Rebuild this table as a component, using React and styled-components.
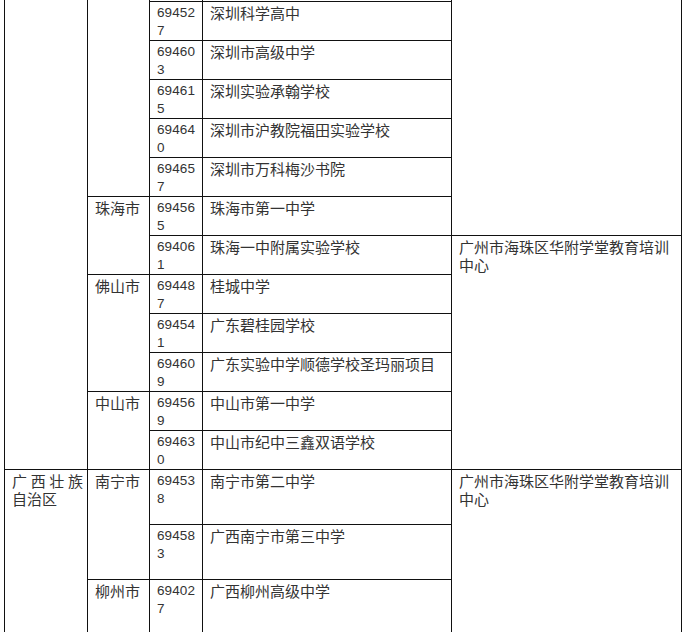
import React from "react";
import styled, { createGlobalStyle } from "styled-components";

const GlobalStyle = createGlobalStyle`
  html, body { margin: 0; padding: 0; background: #fff; overflow: hidden; }
`;

const Sheet = styled.table`
  margin: -22px 0 0 4px;
  border-collapse: collapse;
  table-layout: fixed;
  width: 677px;
  font-family: "Noto Sans CJK SC", sans-serif;
  font-size: 15px;
  color: #333;
`;

const Col = styled.col`
  width: ${(p) => p.$w}px;
`;

const Row = styled.tr`
  height: ${(p) => p.$h}px;
`;

const Cell = styled.td`
  border: 1px solid #111;
  padding: 2px 4px 0 7px;
  vertical-align: top;
  line-height: 18px;
  text-align: ${(p) => (p.$justify ? "justify" : "left")};
  word-break: break-all;
`;

const Code = styled(Cell)`
  font-family: "Liberation Sans", sans-serif;
  font-size: 13.5px;
  letter-spacing: 0.1px;
`;

const CENTER = "广州市海珠区华附学堂教育培训中心";

const columns = [83, 62, 53, 249, 230];

const rows = [
  { h: 23, prov: { text: "", span: 13 }, city: { text: "", span: 6 }, code: "", school: "", center: { text: "", span: 7 } },
  { h: 39, code: "694527", school: "深圳科学高中" },
  { h: 39, code: "694603", school: "深圳市高级中学" },
  { h: 39, code: "694615", school: "深圳实验承翰学校" },
  { h: 39, code: "694640", school: "深圳市沪教院福田实验学校" },
  { h: 39, code: "694657", school: "深圳市万科梅沙书院" },
  { h: 39, city: { text: "珠海市", span: 2 }, code: "694565", school: "珠海市第一中学" },
  { h: 39, code: "694061", school: "珠海一中附属实验学校", center: { text: CENTER, span: 6 } },
  { h: 39, city: { text: "佛山市", span: 3 }, code: "694487", school: "桂城中学" },
  { h: 39, code: "694541", school: "广东碧桂园学校" },
  { h: 39, code: "694609", school: "广东实验中学顺德学校圣玛丽项目" },
  { h: 39, city: { text: "中山市", span: 2 }, code: "694569", school: "中山市第一中学" },
  { h: 39, code: "694630", school: "中山市纪中三鑫双语学校" },
  { h: 55, prov: { text: "广西壮族自治区", span: 3 }, city: { text: "南宁市", span: 2 }, code: "694538", school: "南宁市第二中学", center: { text: CENTER, span: 3 } },
  { h: 55, code: "694583", school: "广西南宁市第三中学" },
  { h: 60, city: { text: "柳州市", span: 1 }, code: "694027", school: "广西柳州高级中学" },
];

export default function App() {
  return (
    <>
      <GlobalStyle />
      <Sheet>
        <colgroup>
          {columns.map((w, i) => (
            <Col key={i} $w={w} />
          ))}
        </colgroup>
        <tbody>
          {rows.map((r, i) => (
            <Row key={i} $h={r.h}>
              {r.prov && (
                <Cell rowSpan={r.prov.span} $justify>
                  {r.prov.text}
                </Cell>
              )}
              {r.city && <Cell rowSpan={r.city.span}>{r.city.text}</Cell>}
              <Code>{r.code}</Code>
              <Cell>{r.school}</Cell>
              {r.center && <Cell rowSpan={r.center.span}>{r.center.text}</Cell>}
            </Row>
          ))}
        </tbody>
      </Sheet>
    </>
  );
}
